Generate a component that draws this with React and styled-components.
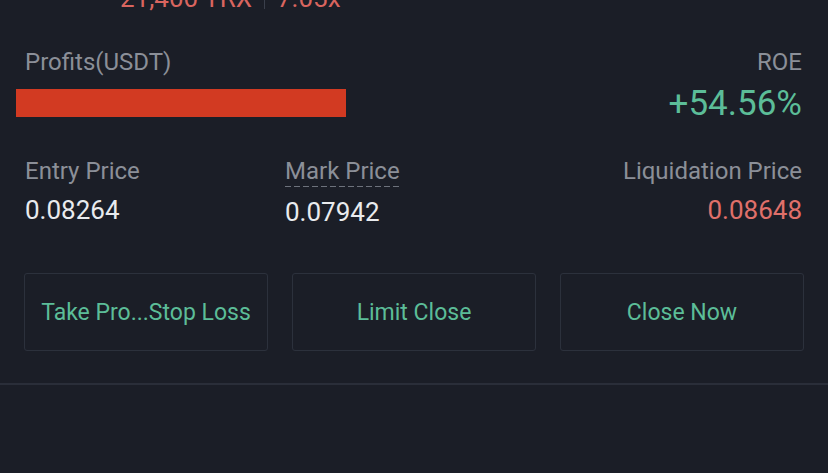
import React from "react";
import styled, { createGlobalStyle } from "styled-components";

const Global = createGlobalStyle`
  html, body {
    margin: 0;
    padding: 0;
    background: #1b1e27;
    overflow: hidden;
  }
  body {
    font-family: Roboto, "Liberation Sans", sans-serif;
  }
`;

const Page = styled.div`
  width: 828px;
  height: 473px;
  background: #1b1e27;
  overflow: hidden;
`;

const TopLine = styled.div`
  display: flex;
  align-items: center;
  margin: -17px 0 0 120px;
  height: 30px;
  font-size: 26px;
  line-height: 30px;
  color: #d9655f;
`;

const Sep = styled.span`
  width: 1px;
  height: 22px;
  margin: 0 12px;
  background: #3a3f4b;
`;

const ProfitRow = styled.div`
  display: flex;
  justify-content: space-between;
  padding: 35px 26px 0 25px;
`;

const Col = styled.div`
  display: flex;
  flex-direction: column;
  align-items: ${(p) => (p.$right ? "flex-end" : "flex-start")};
`;

const Label = styled.div`
  font-size: 24px;
  line-height: 28px;
  color: #8b8f98;
`;

const Dashed = styled.span`
  display: inline-block;
  line-height: 24px;
  height: 28px;
  box-sizing: border-box;
  background-image: repeating-linear-gradient(
    to right,
    #6d727c 0,
    #6d727c 6px,
    transparent 6px,
    transparent 9px
  );
  background-size: 100% 1.5px;
  background-repeat: no-repeat;
  background-position: 0 100%;
`;

const Bar = styled.div`
  width: 330px;
  height: 28px;
  margin: 13px 0 0 -9px;
  background: #d23a22;
`;

const Roe = styled.div`
  margin-top: 8px;
  font-size: 35px;
  line-height: 40px;
  color: #5cbd98;
`;

const InfoRow = styled.div`
  display: grid;
  grid-template-columns: 260px 1fr auto;
  padding: 33px 26px 0 25px;
`;

const Value = styled.div`
  margin-top: 10px;
  font-size: 26px;
  line-height: 30px;
  color: ${(p) => (p.$red ? "#e0706a" : "#e9ebee")};
`;

const Buttons = styled.div`
  display: grid;
  grid-template-columns: repeat(3, 1fr);
  gap: 24px;
  padding: 46px 24px 0 24px;
`;

const Button = styled.button`
  height: 78px;
  background: transparent;
  border: 1.5px solid #2c313c;
  border-radius: 3px;
  font-family: Roboto, "Liberation Sans", sans-serif;
  font-size: 23px;
  color: #5cbd98;
  padding: 0;
  cursor: pointer;
`;

const Divider = styled.div`
  height: 2px;
  margin-top: 32px;
  background: #2a2e39;
`;

export default function App() {
  return (
    <Page>
      <Global />
      <TopLine>
        <span>21,400 TRX</span>
        <Sep />
        <span>7.05x</span>
      </TopLine>
      <ProfitRow>
        <Col>
          <Label>Profits(USDT)</Label>
          <Bar />
        </Col>
        <Col $right>
          <Label>ROE</Label>
          <Roe>+54.56%</Roe>
        </Col>
      </ProfitRow>
      <InfoRow>
        <Col>
          <Label>Entry Price</Label>
          <Value>0.08264</Value>
        </Col>
        <Col>
          <Label>
            <Dashed>Mark Price</Dashed>
          </Label>
          <Value>0.07942</Value>
        </Col>
        <Col $right>
          <Label>Liquidation Price</Label>
          <Value $red>0.08648</Value>
        </Col>
      </InfoRow>
      <Buttons>
        <Button>Take Pro...Stop Loss</Button>
        <Button>Limit Close</Button>
        <Button>Close Now</Button>
      </Buttons>
      <Divider />
    </Page>
  );
}
